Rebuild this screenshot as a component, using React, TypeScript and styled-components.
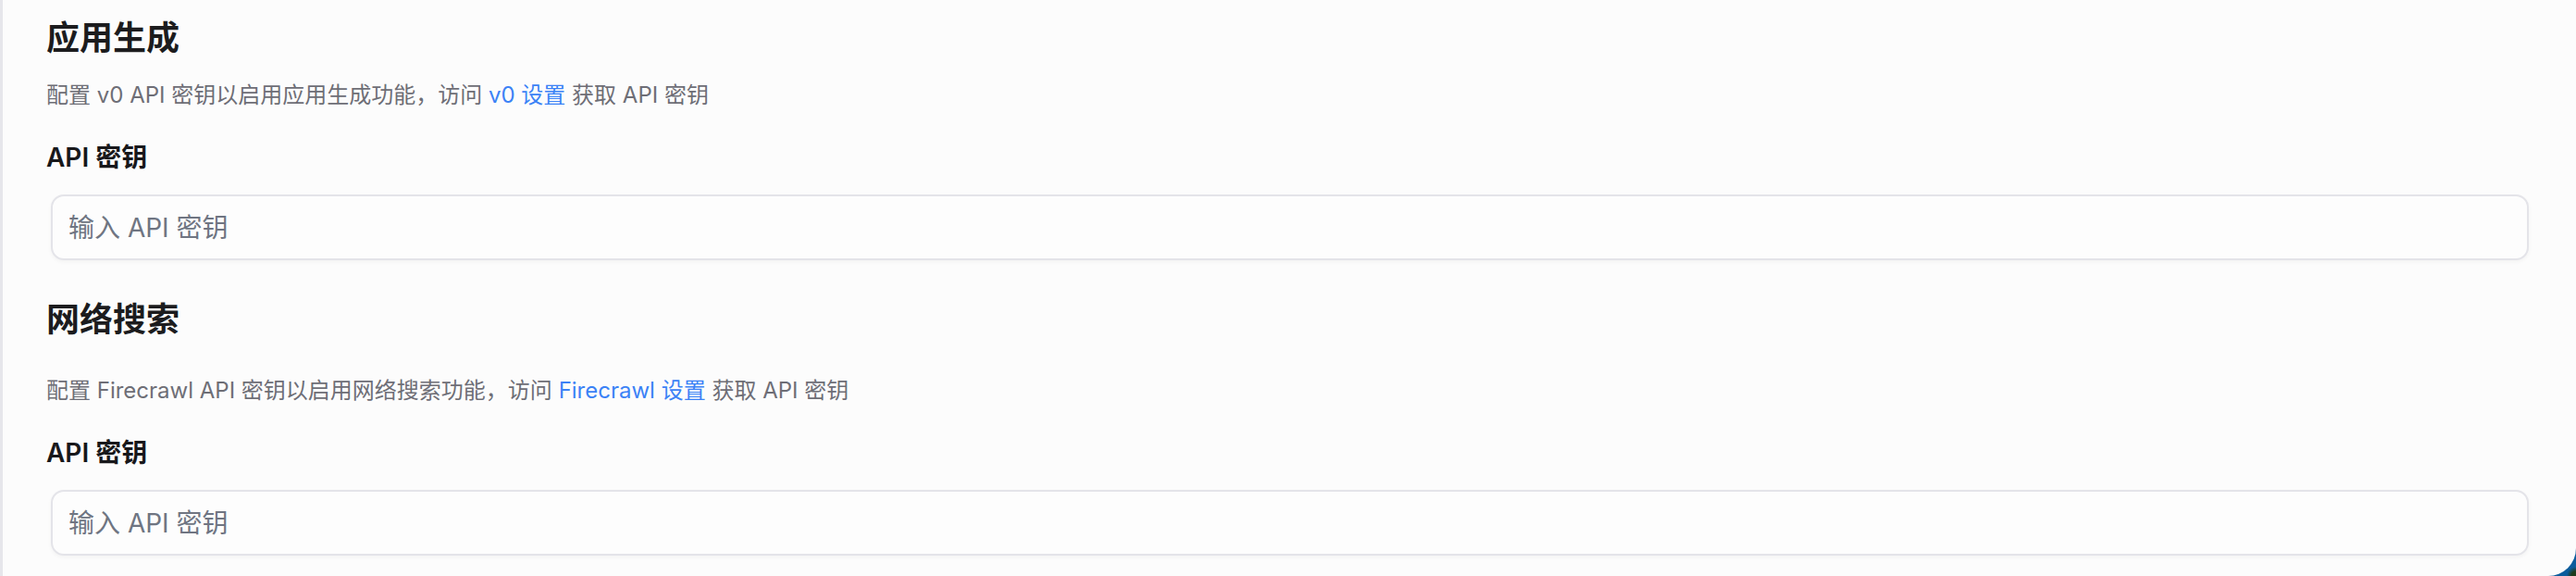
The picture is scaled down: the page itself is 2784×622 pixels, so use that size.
import React from "react";
import styled, { createGlobalStyle } from "styled-components";

const GlobalStyle = createGlobalStyle`
  html, body, #root {
    margin: 0;
    padding: 0;
    height: 100%;
  }
  body {
    background: radial-gradient(circle at 100% 100%, #1d3a1c 0, #1d3a1c 5px, #0b5c9c 10px, #0b5c9c 100%);
    font-family: Inter, "Noto Sans CJK SC", "Noto Sans", sans-serif;
    overflow: hidden;
  }
  * { box-sizing: border-box; }
`;

const Panel = styled.main`
  height: 100%;
  background: #fcfcfc;
  border-left: 3px solid #e6e6eb;
  border-bottom-right-radius: 30px;
  padding: 17px 46px 0 47px;
  display: flex;
  flex-direction: column;
`;

const Section = styled.section<{ $first?: boolean }>`
  display: flex;
  flex-direction: column;
  margin-top: ${(p) => (p.$first ? "0" : "40px")};
`;

const Title = styled.h2<{ $gap: number }>`
  margin: 0 0 ${(p) => p.$gap}px 0;
  font-size: 36px;
  line-height: 48px;
  font-weight: 700;
  color: #1c1c1e;
`;

const Description = styled.p`
  margin: 0 0 31px 0;
  font-size: 24px;
  line-height: 32px;
  color: #6e6e76;
`;

const Link = styled.a`
  color: #3b82f6;
  text-decoration: none;
`;

const Label = styled.label`
  margin: 0 0 20px 0;
  font-size: 28px;
  line-height: 40px;
  font-weight: 600;
  color: #18181b;
`;

const FieldWrap = styled.div`
  padding: 0 5px;
`;

const Input = styled.input`
  display: block;
  width: 100%;
  height: 71px;
  padding: 0 17px;
  border: 2px solid #e4e4e9;
  border-radius: 14px;
  background: #fdfdfd;
  box-shadow: 0 2px 4px rgba(0, 0, 0, 0.04);
  font-family: inherit;
  font-size: 28px;
  color: #18181b;
  outline: none;
  &::placeholder {
    color: #6f7582;
  }
`;

type Props = {
  first?: boolean;
  title: string;
  titleGap: number;
  before: string;
  link: string;
  after: string;
};

function KeySection({ first, title, titleGap, before, link, after }: Props) {
  return (
    <Section $first={first}>
      <Title $gap={titleGap}>{title}</Title>
      <Description>
        {before}
        <Link href="#">{link}</Link>
        {after}
      </Description>
      <Label>API 密钥</Label>
      <FieldWrap>
        <Input type="password" placeholder="输入 API 密钥" />
      </FieldWrap>
    </Section>
  );
}

export default function App() {
  return (
    <>
      <GlobalStyle />
      <Panel>
        <KeySection
          first
          title="应用生成"
          titleGap={22}
          before="配置 v0 API 密钥以启用应用生成功能，访问 "
          link="v0 设置"
          after=" 获取 API 密钥"
        />
        <KeySection
          title="网络搜索"
          titleGap={37}
          before="配置 Firecrawl API 密钥以启用网络搜索功能，访问 "
          link="Firecrawl 设置"
          after=" 获取 API 密钥"
        />
      </Panel>
    </>
  );
}
